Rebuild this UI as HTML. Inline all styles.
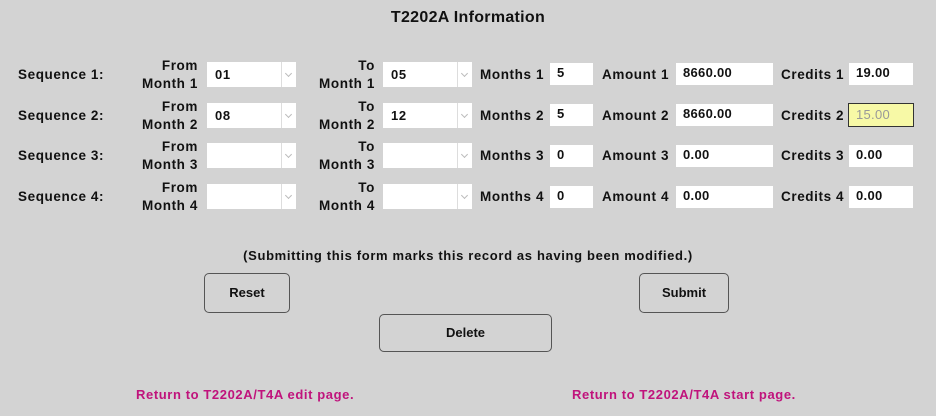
<!DOCTYPE html>
<html><head><meta charset="utf-8"><style>
body{margin:0;width:936px;height:416px;background:#d3d3d3;font-family:"Liberation Sans",sans-serif;font-weight:bold;font-size:13.5px;color:#111;position:relative;overflow:hidden;letter-spacing:0.6px}
.a{position:absolute;white-space:nowrap}
.r{text-align:right;line-height:18px}
.in{position:absolute;background:#fff;height:22px;line-height:22px;font-size:13px;padding-left:7px;box-sizing:border-box;letter-spacing:0.3px}
.sel{position:absolute;background:#fff;height:25px;width:89px;box-sizing:border-box}
.sel span{position:absolute;left:8px;top:0;line-height:25px;font-size:13px}
.sel i{position:absolute;right:0;top:0;width:14px;height:25px;border-left:1px solid #ddd;background:#fff}
.sel i:after{content:"";position:absolute;left:4px;top:9px;width:4px;height:4px;border-right:1px solid #bbb;border-bottom:1px solid #bbb;transform:rotate(45deg)}
.btn{position:absolute;border:1px solid #555;border-radius:5px;text-align:center;font-size:13px;box-sizing:border-box;letter-spacing:0}
.lk{color:#c0137c}
</style></head><body>
<div class="a" style="left:0;width:936px;text-align:center;top:9px;font-size:16px;letter-spacing:0.3px">T2202A Information</div>

<div class="a" style="left:18px;top:67px">Sequence 1:</div>
<div class="a" style="left:18px;top:108px">Sequence 2:</div>
<div class="a" style="left:18px;top:148px">Sequence 3:</div>
<div class="a" style="left:18px;top:189px">Sequence 4:</div>

<div class="a r" style="right:738px;top:57px">From<br>Month 1</div>
<div class="a r" style="right:738px;top:98px">From<br>Month 2</div>
<div class="a r" style="right:738px;top:138px">From<br>Month 3</div>
<div class="a r" style="right:738px;top:179px">From<br>Month 4</div>

<div class="a r" style="right:561px;top:57px">To<br>Month 1</div>
<div class="a r" style="right:561px;top:98px">To<br>Month 2</div>
<div class="a r" style="right:561px;top:138px">To<br>Month 3</div>
<div class="a r" style="right:561px;top:179px">To<br>Month 4</div>

<div class="sel" style="left:207px;top:62px"><span>01</span><i></i></div>
<div class="sel" style="left:207px;top:103px"><span>08</span><i></i></div>
<div class="sel" style="left:207px;top:143px"><i></i></div>
<div class="sel" style="left:207px;top:184px"><i></i></div>
<div class="sel" style="left:383px;top:62px"><span>05</span><i></i></div>
<div class="sel" style="left:383px;top:103px"><span>12</span><i></i></div>
<div class="sel" style="left:383px;top:143px"><i></i></div>
<div class="sel" style="left:383px;top:184px"><i></i></div>

<div class="a" style="left:480px;top:67px">Months 1</div>
<div class="a" style="left:480px;top:108px">Months 2</div>
<div class="a" style="left:480px;top:148px">Months 3</div>
<div class="a" style="left:480px;top:189px">Months 4</div>
<div class="in" style="left:550px;top:63px;width:43px;line-height:19px">5</div>
<div class="in" style="left:550px;top:104px;width:43px;line-height:19px">5</div>
<div class="in" style="left:550px;top:145px;width:43px;line-height:19px">0</div>
<div class="in" style="left:550px;top:186px;width:43px;line-height:19px">0</div>

<div class="a" style="left:602px;top:67px">Amount 1</div>
<div class="a" style="left:602px;top:108px">Amount 2</div>
<div class="a" style="left:602px;top:148px">Amount 3</div>
<div class="a" style="left:602px;top:189px">Amount 4</div>
<div class="in" style="left:676px;top:63px;width:97px;line-height:19px">8660.00</div>
<div class="in" style="left:676px;top:104px;width:97px;line-height:19px">8660.00</div>
<div class="in" style="left:676px;top:145px;width:97px;line-height:19px">0.00</div>
<div class="in" style="left:676px;top:186px;width:97px;line-height:19px">0.00</div>

<div class="a" style="left:781px;top:67px">Credits 1</div>
<div class="a" style="left:781px;top:108px">Credits 2</div>
<div class="a" style="left:781px;top:148px">Credits 3</div>
<div class="a" style="left:781px;top:189px">Credits 4</div>
<div class="in" style="left:849px;top:63px;width:64px;line-height:19px">19.00</div>
<div class="in" style="left:848px;top:103px;width:66px;height:24px;line-height:21px;background:#f7f9a6;border:1px solid #333;color:#999;font-weight:normal">15.00</div>
<div class="in" style="left:849px;top:145px;width:64px;line-height:19px">0.00</div>
<div class="in" style="left:849px;top:186px;width:64px;line-height:19px">0.00</div>

<div class="a" style="left:0;width:936px;text-align:center;top:248px;font-size:13px;letter-spacing:0.65px">(Submitting this form marks this record as having been modified.)</div>
<div class="btn" style="left:204px;top:273px;width:86px;height:40px;line-height:38px">Reset</div>
<div class="btn" style="left:639px;top:273px;width:90px;height:40px;line-height:38px">Submit</div>
<div class="btn" style="left:379px;top:314px;width:173px;height:38px;line-height:36px">Delete</div>

<div class="a lk" style="left:136px;top:387px;font-size:13px">Return to T2202A/T4A edit page.</div>
<div class="a lk" style="left:572px;top:387px;font-size:13px">Return to T2202A/T4A start page.</div>
</body></html>
